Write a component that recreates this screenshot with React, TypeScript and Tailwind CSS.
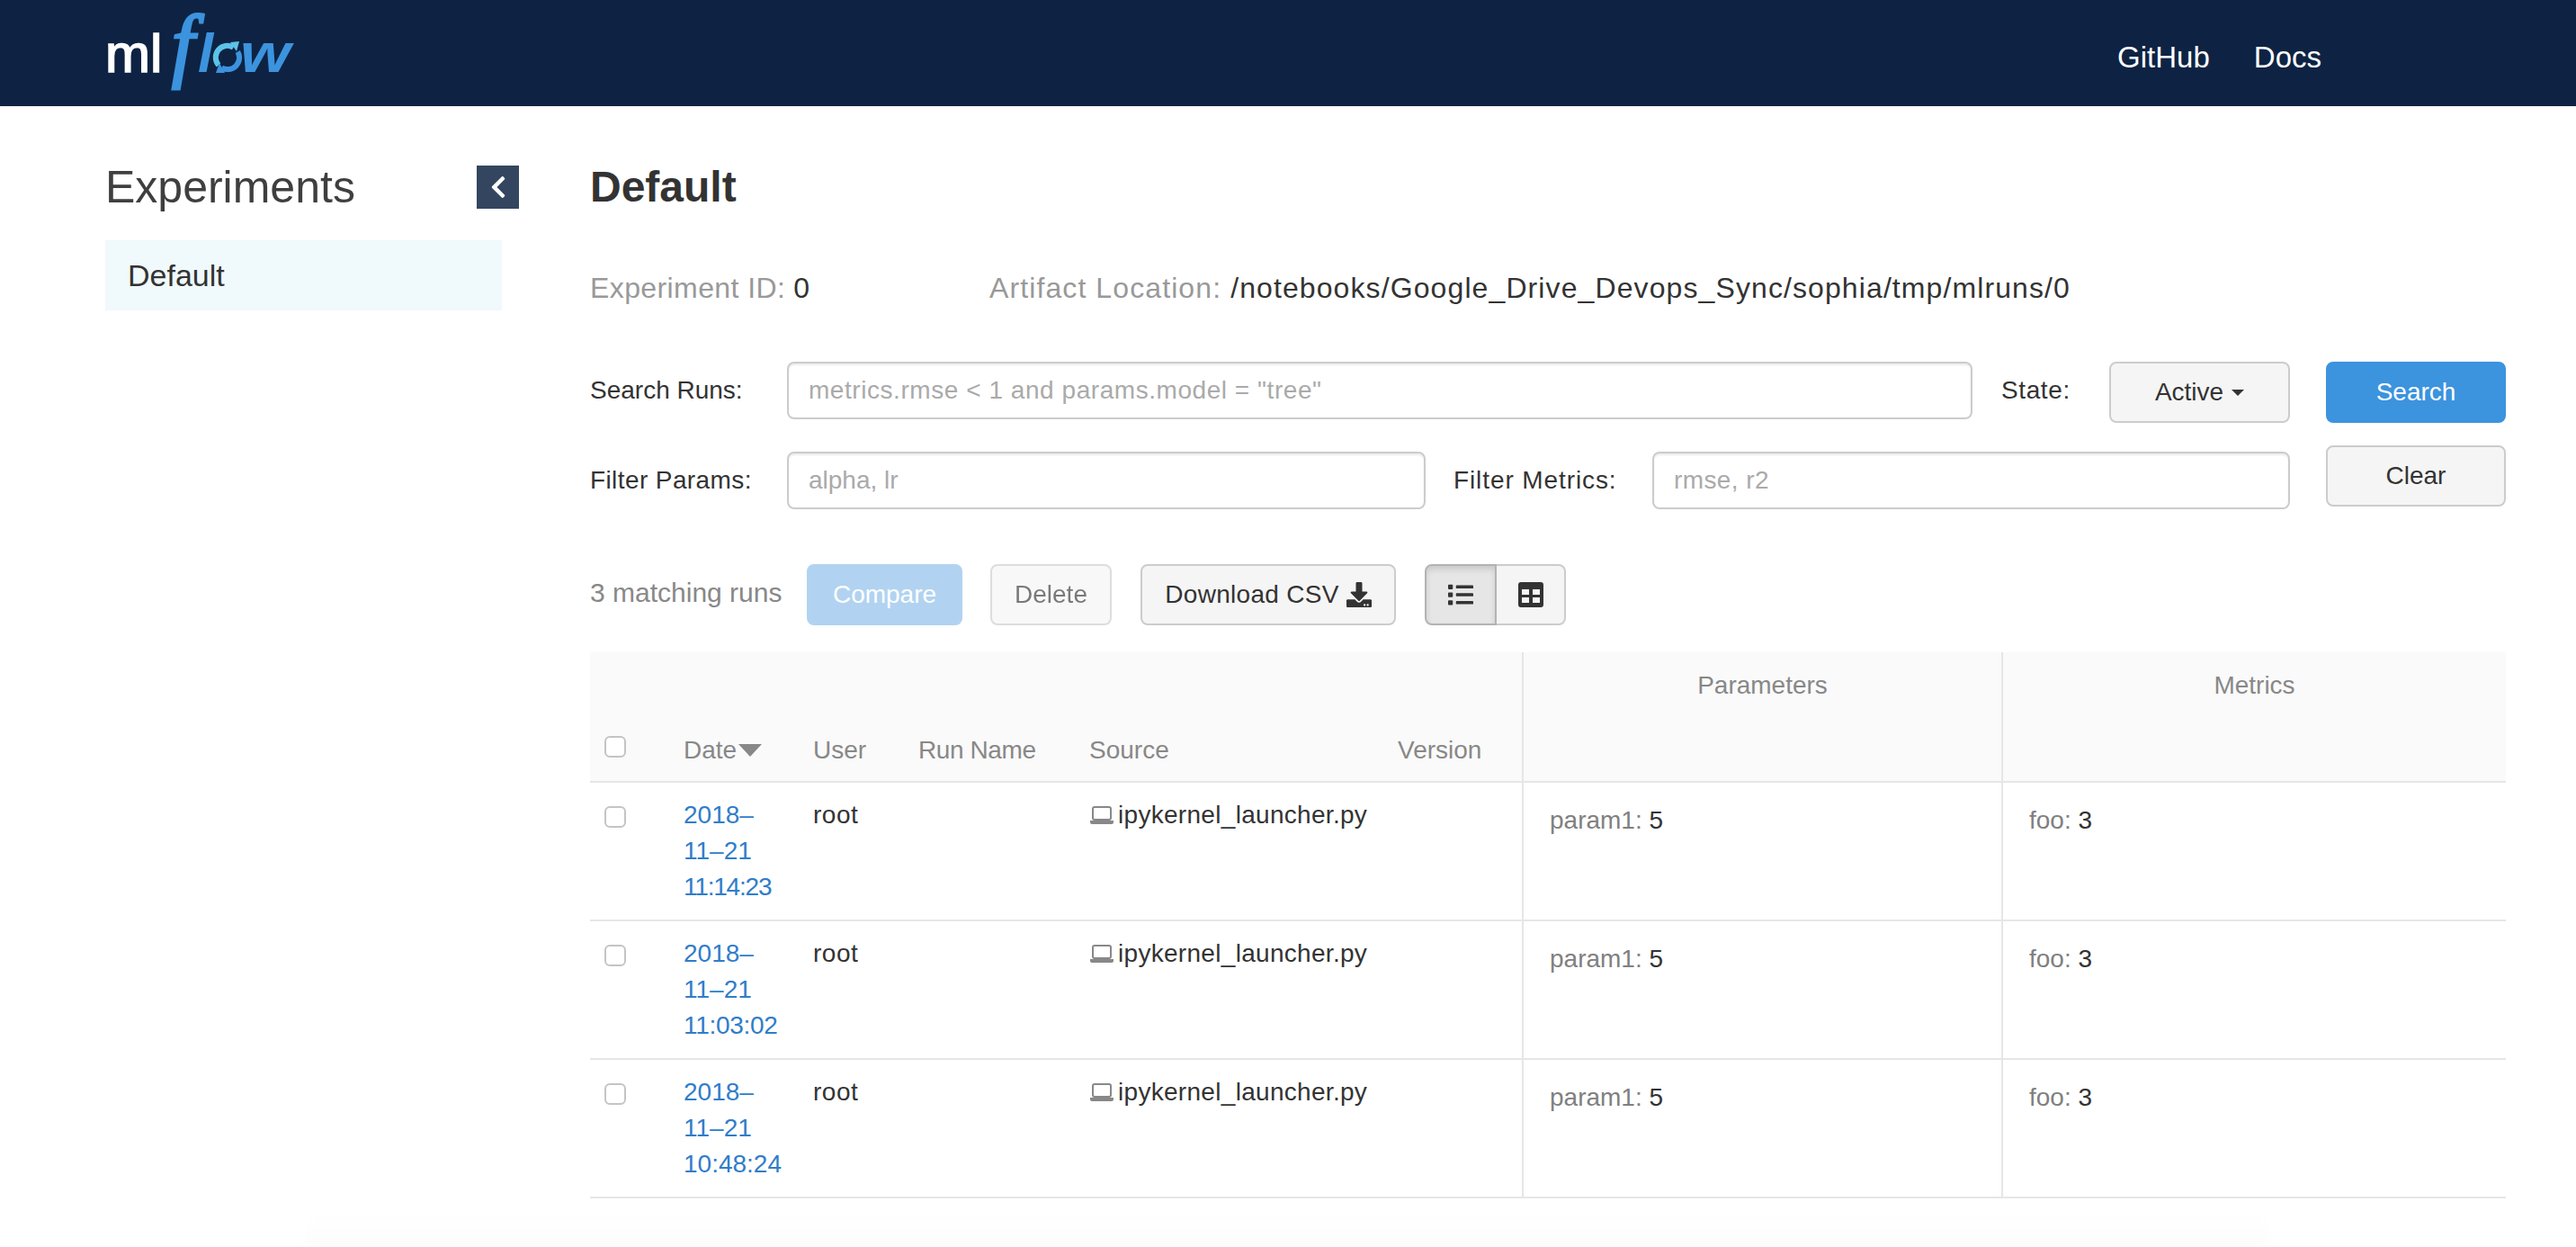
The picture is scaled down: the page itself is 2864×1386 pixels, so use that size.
import { FaChevronLeft, FaDownload, FaList } from 'react-icons/fa'

const runs = [
  { date: '2018–', day: '11–21', time: '11:14:23', timeCls: 'tracking-[-1.2px]' },
  { date: '2018–', day: '11–21', time: '11:03:02', timeCls: 'tracking-[-0.3px]' },
  { date: '2018–', day: '11–21', time: '10:48:24', timeCls: 'tracking-normal' },
]

function Logo() {
  return (
    <svg width="212" height="84" viewBox="0 0 212 84" className="block overflow-visible">
      <text x="0" y="63" fontFamily="'Liberation Sans', sans-serif" fontSize="60" fill="#fff" stroke="#fff" strokeWidth="1.6">ml</text>
      <text x="74" y="63" fontFamily="'Liberation Serif', serif" fontStyle="italic" fontSize="90" fill="#3c93de" stroke="#3c93de" strokeWidth="3">f</text>
      <text x="103" y="63" fontFamily="'Liberation Sans', sans-serif" fontStyle="italic" fontWeight="700" fontSize="62" fill="#3c93de">l</text>
      <path d="M142.5 35.7A13 13 0 0 0 126 55.4" fill="none" stroke="#5cc3e8" strokeWidth="6" />
      <polygon points="139,30 149,29 146,40" fill="#5cc3e8" />
      <path d="M129.5 58.3A13 13 0 0 0 147.3 40.5" fill="none" stroke="#3c93de" strokeWidth="6" />
      <polygon points="133,64 123,64 127,53" fill="#3c93de" />
      <text x="150" y="63" fontFamily="'Liberation Sans', sans-serif" fontStyle="italic" fontWeight="700" fontSize="62" fill="#3c93de" textLength="56" lengthAdjust="spacingAndGlyphs">w</text>
    </svg>
  )
}

function Laptop() {
  return (
    <svg width="28" height="22" viewBox="0 0 28 22" className="inline-block mr-[4px] align-[-2px]">
      <rect x="4" y="2" width="20" height="14" rx="2" fill="none" stroke="#888" strokeWidth="2" />
      <path d="M1 17h26v2a2 2 0 0 1-2 2H3a2 2 0 0 1-2-2z" fill="#888" />
    </svg>
  )
}

function TableIcon() {
  return (
    <svg width="28" height="28" viewBox="0 0 28 28">
      <path fillRule="evenodd" fill="#333" d="M3 0h22a3 3 0 0 1 3 3v22a3 3 0 0 1-3 3H3a3 3 0 0 1-3-3V3a3 3 0 0 1 3-3zM4 8v6h8V8zM16 8v6h8V8zM4 17v6h8v-6zM16 17v6h8v-6z" />
    </svg>
  )
}

const inputCls =
  'h-[64px] border-2 border-[#ccc] rounded-[8px] px-[22px] text-[28px] text-[#333] bg-white shadow-[inset_0_2px_2px_rgba(0,0,0,0.075)] placeholder:text-[#aaa] outline-none'
const btnCls =
  'h-[68px] border-2 rounded-[8px] text-[28px] flex items-center justify-center'
const defaultBtn = 'border-[#ccc] bg-[#f5f5f5] text-[#333]'
const checkCls = 'block appearance-none w-[24px] h-[24px] border-2 border-[#c4c4c4] rounded-[6px] bg-white'

export default function App() {
  return (
    <div className="h-[1386px] flex flex-col bg-white text-[#333] font-['Liberation_Sans',Arial,sans-serif] overflow-hidden">
      <header className="h-[118px] shrink-0 bg-[#0e2343] flex items-center justify-between pl-[117px] pr-[283px]">
        <Logo />
        <nav className="flex gap-[49px] text-[33px] text-white mt-[9px]">
          <span>GitHub</span>
          <span>Docs</span>
        </nav>
      </header>

      <div className="flex">
        <aside className="w-[656px] shrink-0 pl-[117px] pr-[79px] pt-[66px]">
          <div className="flex items-center justify-between h-[48px]">
            <h1 className="text-[50px] font-normal leading-none text-[#3f3f3f]">Experiments</h1>
            <button className="w-[47px] h-[48px] bg-[#34465f] text-white flex items-center justify-center text-[28px]">
              <FaChevronLeft />
            </button>
          </div>
          <div className="mt-[35px] mr-[19px] h-[78px] bg-[#f0f9fb] pl-[25px] flex items-center text-[34px]">Default</div>
        </aside>

        <main className="flex-1 pr-[78px] pt-[66px]">
          <h2 className="h-[48px] flex items-center text-[48px] font-bold leading-none">Default</h2>

          <div className="mt-[66px] h-[44px] flex items-center text-[32px]">
            <div className="w-[444px] shrink-0">
              <span className="text-[#999] tracking-[0.4px]">Experiment ID:</span> 0
            </div>
            <div className="tracking-[1.1px]">
              <span className="text-[#999]">Artifact Location:</span> /notebooks/Google_Drive_Devops_Sync/sophia/tmp/mlruns/0
            </div>
          </div>

          <div className="mt-[60px] flex gap-[40px] text-[28px]">
            <div className="flex-1">
              <div className="flex items-start h-[68px]">
                <label className="w-[219px] shrink-0 leading-[64px]">Search Runs:</label>
                <input className={`${inputCls} w-[1318px] tracking-[0.55px]`} placeholder={'metrics.rmse < 1 and params.model = "tree"'} />
                <label className="ml-[32px] w-[120px] shrink-0 leading-[64px] tracking-[0.6px]">State:</label>
                <button className={`${btnCls} ${defaultBtn} w-[201px]`}>
                  Active
                  <span className="ml-[9px] border-x-[7px] border-x-transparent border-t-[7px] border-t-[#333]" />
                </button>
              </div>
              <div className="flex items-center mt-[32px]">
                <label className="w-[219px] shrink-0 tracking-[0.4px]">Filter Params:</label>
                <input className={`${inputCls} w-[710px]`} placeholder="alpha, lr" />
                <label className="ml-[31px] w-[221px] shrink-0 tracking-[0.9px]">Filter Metrics:</label>
                <input className={`${inputCls} w-[709px] tracking-[0.4px]`} placeholder="rmse, r2" />
              </div>
            </div>
            <div className="w-[200px] shrink-0 flex flex-col gap-[25px]">
              <button className={`${btnCls} bg-[#3c93de] border-[#3c93de] text-white`}>Search</button>
              <button className={`${btnCls} ${defaultBtn}`}>Clear</button>
            </div>
          </div>

          <div className="mt-[61px] flex items-center text-[28px]">
            <span className="w-[241px] shrink-0 text-[#888] text-[30px] mb-[6px]">3 matching runs</span>
            <button className="h-[68px] w-[173px] rounded-[8px] bg-[#b1d3f1] text-white">Compare</button>
            <button className={`${btnCls} ${defaultBtn} ml-[31px] w-[135px] opacity-65`}>Delete</button>
            <button className={`${btnCls} ${defaultBtn} ml-[32px] w-[284px] gap-[8px] tracking-[0.3px]`}>
              Download CSV <FaDownload className="text-[28px]" />
            </button>
            <div className="ml-[32px] flex h-[68px]">
              <button className="w-[80px] border-2 border-[#b3b3b3] rounded-l-[8px] bg-[#e6e6e6] shadow-[inset_0_4px_6px_rgba(0,0,0,0.125)] flex items-center justify-center">
                <FaList className="text-[28px]" />
              </button>
              <button className="w-[77px] border-2 border-l-0 border-[#ccc] rounded-r-[8px] bg-[#f5f5f5] flex items-center justify-center">
                <TableIcon />
              </button>
            </div>
          </div>

          <table className="mt-[30px] w-[2130px] table-fixed border-collapse text-[28px]">
            <colgroup>
              <col className="w-[104px]" />
              <col className="w-[144px]" />
              <col className="w-[117px]" />
              <col className="w-[190px]" />
              <col className="w-[343px]" />
              <col className="w-[139px]" />
              <col className="w-[533px]" />
              <col className="w-[560px]" />
            </colgroup>
            <thead>
              <tr className="h-[144px] bg-[#fafafa] border-b-2 border-[#e6e6e6] text-[#888]">
                <th className="pl-[16px] align-bottom pb-[26px] font-normal text-left">
                  <input type="checkbox" className={checkCls} />
                </th>
                <th className="align-bottom pb-[13px] font-normal text-left">
                  Date
                  <span className="inline-block ml-[2px] align-[2px] border-x-[13px] border-x-transparent border-t-[14px] border-t-[#888]" />
                </th>
                <th className="align-bottom pb-[13px] font-normal text-left">User</th>
                <th className="align-bottom pb-[13px] font-normal text-left tracking-[-0.4px]">Run Name</th>
                <th className="align-bottom pb-[13px] font-normal text-left">Source</th>
                <th className="align-bottom pb-[13px] font-normal text-left">Version</th>
                <th className="align-top pt-[16px] font-normal text-center border-l-2 border-[#e6e6e6]">Parameters</th>
                <th className="align-top pt-[16px] font-normal text-center border-l-2 border-[#e6e6e6]">Metrics</th>
              </tr>
            </thead>
            <tbody>
              {runs.map((run) => (
                <tr key={run.time} className="h-[154px] border-b-2 border-[#e6e6e6] align-top leading-[40px]">
                  <td className="pl-[16px] pt-[26px]">
                    <input type="checkbox" className={checkCls} />
                  </td>
                  <td className="pt-[16px] text-[#2f7dc9]">
                    <div>{run.date}</div>
                    <div>{run.day}</div>
                    <div className={run.timeCls}>{run.time}</div>
                  </td>
                  <td className="pt-[16px] tracking-[0.5px]">root</td>
                  <td />
                  <td className="pt-[16px] whitespace-nowrap tracking-[0.3px]" colSpan={2}>
                    <Laptop />
                    ipykernel_launcher.py
                  </td>
                  <td className="pl-[29px] pt-[22px] border-l-2 border-[#e6e6e6]">
                    <span className="text-[#808080]">param1:</span> 5
                  </td>
                  <td className="pl-[29px] pt-[22px] border-l-2 border-[#e6e6e6]">
                    <span className="text-[#808080]">foo:</span> 3
                  </td>
                </tr>
              ))}
            </tbody>
          </table>
        </main>
      </div>

      {/* faint shadow along the bottom edge of the window */}
      <div className="mt-auto mx-[340px] h-[36px] shrink-0 bg-gradient-to-b from-white to-[#fcfcfc] blur-[4px]" />
    </div>
  )
}
